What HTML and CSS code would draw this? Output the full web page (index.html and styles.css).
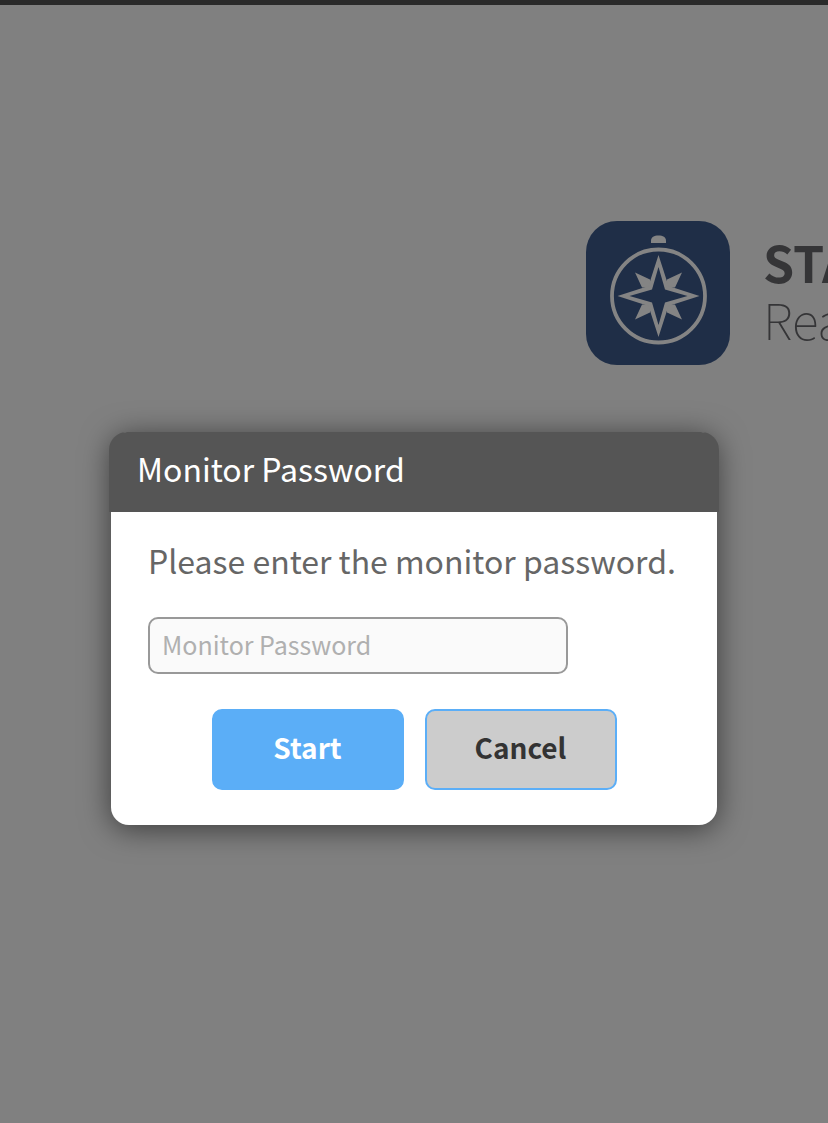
FILE: index.html
```
<!DOCTYPE html>
<html lang="en">
<head>
<meta charset="utf-8">
<meta name="viewport" content="width=device-width, initial-scale=1">
<title>Monitor Password</title>
<link rel="stylesheet" href="styles.css">
</head>
<body class="page">
<header class="brand">
  <svg class="brand-icon" viewBox="0 0 144 144" aria-hidden="true">
    <rect width="144" height="144" rx="31" fill="#1f2e47"/>
    <path d="M65 22v-2c0-4 3-5.500 7.500-5.500s7.500 1.500 7.500 5.500v2z" fill="#848484"/>
    <circle cx="72.500" cy="75" r="46.500" fill="none" stroke="#848484" stroke-width="3.800"/>
    <g transform="translate(72.500 75)">
      <path d="M-23.500-23.500-8.500-16.500V-8.500H-16.500ZM23.500-23.500 8.500-16.500V-8.500H16.500ZM-23.500 23.500-8.500 16.500V8.500H-16.500ZM23.500 23.500 8.500 16.500V8.500H16.500Z" fill="#848484"/>
      <path d="M0-41 10-10 41 0 10 10 0 41-10 10-41 0-10-10Z" fill="#848484"/>
      <path d="M0-29 6.500-6.500 29 0 6.500 6.500 0 29-6.500 6.500-29 0-6.500-6.500Z" fill="#1f2e47"/>
    </g>
  </svg>
  <div class="brand-text">
    <span class="brand-name">STA</span>
    <span class="brand-sub">Rea</span>
  </div>
</header>
<section class="dialog" role="dialog" aria-labelledby="dialog-title">
  <h1 class="dialog-title" id="dialog-title">Monitor Password</h1>
  <form class="dialog-body">
    <label class="prompt" for="password">Please enter the monitor password.</label>
    <input class="field" id="password" type="password" placeholder="Monitor Password">
    <div class="actions">
      <button class="button button-start" type="button">Start</button>
      <button class="button button-cancel" type="button">Cancel</button>
    </div>
  </form>
</section>
</body>
</html>
```
FILE: styles.css
```
* {
  box-sizing: border-box;
}

.page {
  margin: 0;
  min-height: 100vh;
  overflow-x: hidden;
  border-top: 5px solid #2a2a2a;
  background: #808080;
  display: flex;
  flex-direction: column;
  align-items: center;
  font-family: "Noto Sans CJK JP", "Noto Sans", sans-serif;
}

.brand {
  width: 100%;
  padding: 216px 0 67px 586px;
  display: flex;
  gap: 33px;
  color: #353537;
}

.brand-icon {
  width: 144px;
  height: 144px;
  flex: none;
}

.brand-text {
  padding-top: 12px;
  display: flex;
  flex-direction: column;
  font-size: 50px;
  line-height: 57px;
}

.brand-name {
  font-weight: 700;
}

.brand-sub {
  font-weight: 100;
}

.dialog {
  width: 606px;
  max-width: 100%;
  border-radius: 18px;
  background: #fff;
  box-shadow: 0 4px 30px rgba(0, 0, 0, 0.55);
}

.dialog-title {
  margin: 0 -2px;
  padding: 12px 28px 20px;
  border-radius: 18px 18px 0 0;
  background: #555;
  color: #fff;
  font-size: 32px;
  font-weight: 400;
  line-height: 48px;
}

.dialog-body {
  padding: 24px 37px 35px;
  display: flex;
  flex-direction: column;
}

.prompt {
  color: #666;
  font-size: 32px;
  line-height: 48px;
  white-space: nowrap;
}

.field {
  width: 420px;
  max-width: 100%;
  height: 57px;
  margin-top: 33px;
  padding: 0 12px 4px;
  border: 2px solid #999;
  border-radius: 10px;
  background: #fafafa;
  color: #555;
  font: inherit;
  font-size: 25px;
}

.field::placeholder {
  color: #b0b0b0;
}

.actions {
  margin-top: 35px;
  display: flex;
  justify-content: center;
  gap: 21px;
}

.button {
  width: 192px;
  height: 81px;
  padding: 0 0 6px;
  border: 2px solid #5baef7;
  border-radius: 10px;
  font: inherit;
  font-size: 28px;
  font-weight: 700;
}

.button-start {
  background: #5baef7;
  color: #fff;
}

.button-cancel {
  background: #ccc;
  color: #333;
}
```
